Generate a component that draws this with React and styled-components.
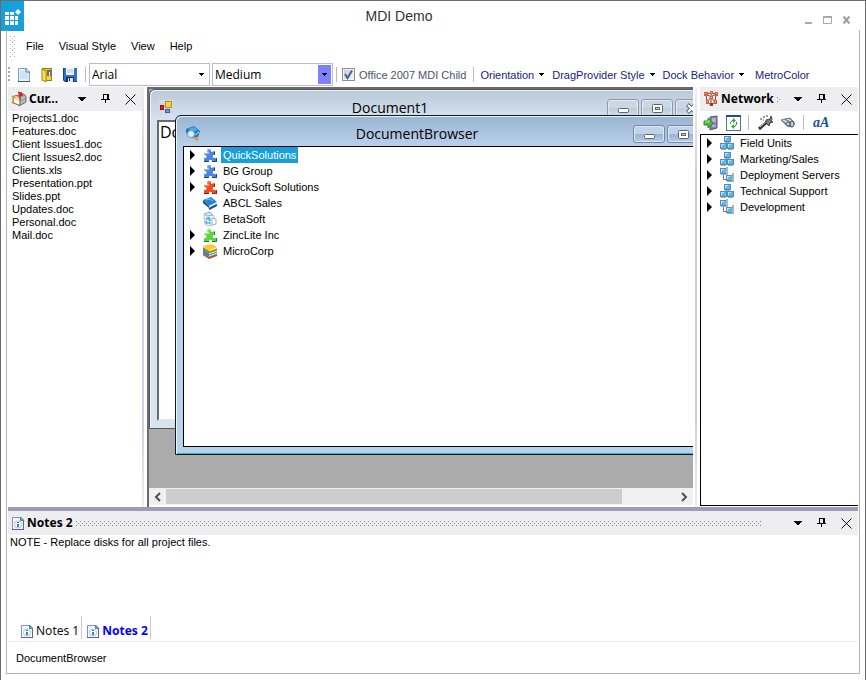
import { useState } from "react";
import styled, { createGlobalStyle } from "styled-components";

const files = [
  "Projects1.doc",
  "Features.doc",
  "Client Issues1.doc",
  "Client Issues2.doc",
  "Clients.xls",
  "Presentation.ppt",
  "Slides.ppt",
  "Updates.doc",
  "Personal.doc",
  "Mail.doc",
];

const companies = [
  { name: "QuickSolutions", icon: <PuzzleIcon light="#9cc4fa" color="#4a86e0" dark="#1d3f94" />, open: true },
  { name: "BG Group", icon: <PuzzleIcon light="#9cc4fa" color="#4a86e0" dark="#1d3f94" />, open: true },
  { name: "QuickSoft Solutions", icon: <PuzzleIcon light="#ff9a70" color="#ee4a26" dark="#9c1c08" />, open: true },
  { name: "ABCL Sales", icon: <BookIcon /> },
  { name: "BetaSoft", icon: <RecycleIcon /> },
  { name: "ZincLite Inc", icon: <PuzzleIcon light="#b8f59a" color="#5cd448" dark="#1d8418" />, open: true },
  { name: "MicroCorp", icon: <BooksIcon />, open: true },
];

const network = [
  { name: "Field Units", icon: <ComputersIcon />, open: true },
  { name: "Marketing/Sales", icon: <ComputersIcon />, open: true },
  { name: "Deployment Servers", icon: <ServersIcon />, open: true },
  { name: "Technical Support", icon: <ComputersIcon />, open: true },
  { name: "Development", icon: <ServersIcon />, open: true },
];

export default function App() {
  const [note, setNote] = useState("NOTE - Replace disks for all project files.");
  const [selected, setSelected] = useState("QuickSolutions");

  return (
    <Window>
      <GlobalStyle />
      <TitleBar>
        <Logo><LogoIcon /></Logo>
        <Title>MDI Demo</Title>
        <WindowButtons>
          <IconButton aria-label="Minimize"><svg width="11" height="10"><path d="M2 8h7" stroke="#a9a9a9" strokeWidth="2" /></svg></IconButton>
          <IconButton aria-label="Maximize"><svg width="11" height="10"><path d="M1.500 2v6.500h8V2" fill="none" stroke="#a9a9a9" /><path d="M1 2h9" stroke="#a9a9a9" strokeWidth="2" /></svg></IconButton>
          <IconButton aria-label="Close"><svg width="11" height="10"><path d="M2.500 1.500l6 7M8.500 1.500l-6 7" stroke="#a0a0a0" strokeWidth="2" /></svg></IconButton>
        </WindowButtons>
      </TitleBar>

      <Frame>
        <MenuBar>
          <MenuGrip />
          <MenuItem>File</MenuItem>
          <MenuItem>Visual Style</MenuItem>
          <MenuItem>View</MenuItem>
          <MenuItem>Help</MenuItem>
        </MenuBar>

        <ToolBar>
          <ToolGrip />
          <FileButtons>
            <IconButton aria-label="New"><NewIcon /></IconButton>
            <IconButton aria-label="Open"><OpenIcon /></IconButton>
            <IconButton aria-label="Save"><SaveIcon /></IconButton>
          </FileButtons>
          <Separator />
          <Combo label="Font" value="Arial" />
          <Combo label="Size" value="Medium" active />
          <Separator />
          <CheckLabel>
            <CheckWrap>
              <CheckBox type="checkbox" defaultChecked />
              <CheckMark width="13" height="13"><path d="M3 6l2.500 4L10 2.500" fill="none" stroke="#46648f" strokeWidth="2" /></CheckMark>
            </CheckWrap>
            Office 2007 MDI Child
          </CheckLabel>
          <Separator />
          <DropButton>Orientation<SmallArrow /></DropButton>
          <DropButton>DragProvider Style<SmallArrow /></DropButton>
          <DropButton>Dock Behavior<SmallArrow /></DropButton>
          <MetroButton>MetroColor</MetroButton>
        </ToolBar>

        <Workspace>
          <LeftDock>
            <DockHeader icon={<MailboxIcon />} title="Cur..." plain />
            <FileList>
              {files.map((file) => <li key={file}>{file}</li>)}
            </FileList>
          </LeftDock>
          <Splitter />
          <MdiArea>
            <MdiCanvas>
              <ChildWindow $x={0} $y={0}>
                <ChildTitle icon={<FormIcon />} title="Document1" />
                <Editor aria-label="Document1" defaultValue="Document1" />
              </ChildWindow>
              <ChildWindow $x={26} $y={26} $active>
                <ChildTitle icon={<BrowserIcon />} title="DocumentBrowser" active />
                <ChildBody>
                  <Tree items={companies} selected={selected} onSelect={setSelected} />
                </ChildBody>
              </ChildWindow>
            </MdiCanvas>
            <ScrollBar>
              <ScrollButton aria-label="Scroll left"><svg width="7" height="10"><path d="M6 1L2 5l4 4" fill="none" stroke="#505050" strokeWidth="2" /></svg></ScrollButton>
              <ScrollThumb />
              <ScrollRest />
              <ScrollButton aria-label="Scroll right"><svg width="7" height="10"><path d="M1 1l4 4-4 4" fill="none" stroke="#505050" strokeWidth="2" /></svg></ScrollButton>
            </ScrollBar>
          </MdiArea>
          <Splitter />
          <RightDock>
            <DockHeader icon={<NetworkIcon />} title="Network" />
            <NetworkTools>
              <IconButton aria-label="Enter"><EnterIcon /></IconButton>
              <IconButton aria-label="Refresh"><RefreshIcon /></IconButton>
              <Separator />
              <IconButton aria-label="Wizard"><WandIcon /></IconButton>
              <IconButton aria-label="Find"><BinocularsIcon /></IconButton>
              <Separator />
              <FontButton aria-label="Font">aA</FontButton>
            </NetworkTools>
            <NetworkBody>
              <Tree items={network} />
            </NetworkBody>
          </RightDock>
        </Workspace>

        <Notes>
          <DockHeader icon={<NoteIcon />} title="Notes 2" wide />
          <NoteText aria-label="Notes 2" value={note} onChange={(e) => setNote(e.target.value)} />
          <Tabs>
            <Tab><NoteIcon />Notes 1</Tab>
            <Tab $active><NoteIcon />Notes 2</Tab>
          </Tabs>
        </Notes>
        <StatusBar>DocumentBrowser</StatusBar>
      </Frame>
    </Window>
  );
}

function Combo({ label, value, active }) {
  return (
    <ComboWrap>
      <Select aria-label={label} defaultValue={value}>
        <option>{value}</option>
      </Select>
      <ComboArrow $active={active}><SmallArrow /></ComboArrow>
    </ComboWrap>
  );
}

function DockHeader({ icon, title, plain, wide }) {
  return (
    <DockHead>
      {icon}
      <DockTitle>{title}</DockTitle>
      <DockDots $plain={plain} $wide={wide} />
      <DockButtons>
        <IconButton aria-label="Window position">
          <svg width="10" height="10"><path d="M1 3h8v1H8v1H7v1H6v1H4V6H3V5H2V4H1z" fill="#000" /></svg>
        </IconButton>
        <IconButton aria-label="Auto hide">
          <svg width="10" height="10" shapeRendering="crispEdges"><path d="M2 0h6v5h1v1H5v3H4V6H0V5h2zM3 1v4h3V1z" fill="#000" fillRule="evenodd" /></svg>
        </IconButton>
        <IconButton aria-label="Close">
          <svg width="11" height="11"><path d="M.5.5l10 10M10.500.5l-10 10" stroke="#111" /></svg>
        </IconButton>
      </DockButtons>
    </DockHead>
  );
}

function ChildTitle({ icon, title, active }) {
  return (
    <ChildBar>
      {icon}
      <ChildName>{title}</ChildName>
      <ChildButtons>
        <ChildButton $active={active} aria-label="Minimize">
          <svg width="13" height="11"><rect x="1.500" y="5.500" width="10" height="4" rx="1" fill="#fff" stroke="#5a6473" /></svg>
        </ChildButton>
        <ChildButton $active={active} aria-label="Restore">
          <svg width="13" height="11"><rect x="1.500" y="1.500" width="10" height="8" rx="1" fill="#fff" stroke="#5a6473" /><rect x="4.500" y="4.500" width="4" height="2" fill="#c3d2e3" stroke="#5a6473" /></svg>
        </ChildButton>
        <ChildButton $active={active} aria-label="Close">
          <svg width="13" height="11"><path d="M2.500 1.500l8 8M10.500 1.500l-8 8" stroke="#5a6473" strokeWidth="4" /><path d="M3 2l7 7M10 2l-7 7" stroke="#fff" strokeWidth="2" /></svg>
        </ChildButton>
      </ChildButtons>
    </ChildBar>
  );
}

function Tree({ items, selected, onSelect }) {
  return (
    <TreeList>
      {items.map((item) => (
        <TreeRow key={item.name}>
          <Expander>
            {item.open && (
              <IconButton aria-label={"Expand " + item.name}>
                <svg width="6" height="10"><path d="M0 0l5 5-5 5z" fill="#000" /></svg>
              </IconButton>
            )}
          </Expander>
          {item.icon}
          <TreeLabel $selected={item.name === selected} onClick={() => onSelect && onSelect(item.name)}>
            {item.name}
          </TreeLabel>
        </TreeRow>
      ))}
    </TreeList>
  );
}

function SmallArrow() {
  return <svg width="6" height="4"><path d="M0 0h5v1H4v1H3v1H2V2H1V1H0z" fill="#000" /></svg>;
}

function LogoIcon() {
  return (
    <svg width="23" height="29" fill="#fff">
      <path d="M4 11h4v3H4zM9 11h4v3H9zM4 15h4v4H4zM9 15h4v4H9zM14 15h3v4h-3zM4 20h4v4H4zM9 20h4v4H9zM14 20h3v4h-3z" />
      <path d="M17 8l3 3-3 3-3-3z" />
    </svg>
  );
}

function NewIcon() {
  return (
    <svg width="16" height="16">
      <path d="M2.500 1.500h8l3 3v10h-11z" fill="#e4f0fb" stroke="#7c9fc6" />
      <path d="M10 1.500V5h4" fill="#fff" stroke="#426c9c" />
      <path d="M4 5h5M4 7h8M4 9h8M4 11h8" stroke="#b4d1ea" />
      <path d="M2 14.500h12" stroke="#4f5f6c" />
    </svg>
  );
}

function OpenIcon() {
  return (
    <svg width="16" height="16">
      <rect x="3.500" y="1.500" width="9" height="12" fill="#f0c52e" stroke="#9a7a1c" />
      <path d="M8 3h4v6H8z" fill="#6a7078" />
      <path d="M10 5h1v4h-1z" fill="#f6f6df" />
      <path d="M3 2l4 2v11l-4-2z" fill="#ffe04a" stroke="#a5821c" />
      <path d="M8 10h4v3H8z" fill="#f7d14a" />
    </svg>
  );
}

function SaveIcon() {
  return (
    <svg width="16" height="16">
      <path d="M1 1h14v14H3l-2-2z" fill="#2f74cc" />
      <path d="M1 1.500h2M1.500 1v12l2 2M15 14.500H3" fill="none" stroke="#16457f" />
      <path d="M4 1h8v7H4z" fill="#f4f9ff" />
      <path d="M5 3h6M5 5h6" stroke="#a9c2e0" />
      <path d="M4 10h8v5H4z" fill="#1c3152" />
      <path d="M6 11h5v4H6z" fill="#dce9f5" />
      <path d="M7 11h1v3H7z" fill="#1c3152" />
    </svg>
  );
}

function MailboxIcon() {
  return (
    <svg width="16" height="16">
      <path d="M5 5l6-2c3 0 4 2 4 4v4l-7 4z" fill="#a3a6ab" stroke="#6b6e72" />
      <path d="M9 8l5-2M10 12l4-2" stroke="#d4d6d9" />
      <path d="M2 8c0-5 6-4 7 0v6.500l-7-2.500z" fill="#f1d8b0" stroke="#8a6f55" />
      <path d="M3 8l5 2v3l-5-2z" fill="#fff" />
      <path d="M7 1l4 1v3L9 4v5" fill="#ee3322" stroke="#c1180d" />
      <path d="M1 5l3 2M1 11l2 1" stroke="#dd9038" strokeWidth="2" />
    </svg>
  );
}

function NetworkIcon() {
  return (
    <svg width="16" height="16">
      <path d="M3 3l5-1 5 1-1 8-4 3-4-3zM3 3l5 3 5-3M8 2v12M4 11l4-5 4 5" fill="none" stroke="#5f4f4c" />
      <path d="M1 1h4v4H1zM7 0h3v3H7zM12 1h3v4h-3zM3 9h3v4H3zM11 9h3v4h-3zM7 5h3v3H7z" fill="#e65b35" />
      <path d="M7 12h3v3H7z" fill="#b82d19" />
      <path d="M2 2.500h1M8 1.500h1M13 2.500h1M4 10.500h1M12 10.500h1M8 6.500h1" stroke="#ffc29c" />
    </svg>
  );
}

function NoteIcon() {
  return (
    <svg width="14" height="16">
      <path d="M1.500 2.500h8l3 3v9h-11z" fill="#f3f6fb" stroke="#8a8fc0" />
      <path d="M9.500 2v3.500h3.500z" fill="#5fb5b0" stroke="#3e8d98" />
      <circle cx="7" cy="9.500" r="3.500" fill="#fff" stroke="#b4c0cc" />
      <path d="M6 7h2v1H6zM6 9h2v3H6z" fill="#2882d6" />
      <path d="M1 14.500h12M12.500 6v9" stroke="#5d629e" />
    </svg>
  );
}

function FormIcon() {
  return (
    <svg width="14" height="14">
      <path d="M0 0h14v14H0z" fill="#d9d9d9" />
      <rect x="6.500" y="1.500" width="6" height="6" fill="#ffd33d" stroke="#c28a16" />
      <rect x="1.500" y="5.500" width="3" height="4" fill="#cf2e22" stroke="#8e1712" />
      <rect x="6.500" y="9.500" width="4" height="3" fill="#6a9df2" stroke="#335fb1" />
    </svg>
  );
}

function BrowserIcon() {
  return (
    <svg width="16" height="16">
      <path d="M1 4l8-3 6 5-2 6-5 1-7-5z" fill="#1e78ca" />
      <path d="M3 4l6-2 4 3-5 2z" fill="#4fa9ea" />
      <path d="M10 10l4-3" stroke="#d5eeff" />
      <circle cx="6" cy="9" r="3.500" fill="#d8f1ff" stroke="#7e9bb3" />
      <path d="M9 12l4 3" stroke="#e98b27" strokeWidth="2" />
    </svg>
  );
}

function PuzzleIcon({ light, color, dark }) {
  return (
    <svg width="14" height="16">
      <path d="M1 6h4C2 1 9 0 8 5l4-1v4c-3-1-3 4 0 3h2v4H9c1-3-4-3-3 0H1v-4c4 1 3-4 0-3z" fill={color} />
      <path d="M1.500 8V6.500H6C3 2 7 1 7 3.500" fill="none" stroke={light} />
      <path d="M1 14.500h5M9 14.500h4.500V11" fill="none" stroke={dark} />
      <path d="M11.500 5v3" stroke={dark} />
    </svg>
  );
}

function BookIcon() {
  return (
    <svg width="14" height="16">
      <path d="M0 5l8-3 6 5-8 4z" fill="#2583d4" />
      <path d="M0 5v3l6 5v-2z" fill="#0b499b" />
      <path d="M6 11l8-4v2l-8 4z" fill="#d6edff" />
      <path d="M6 14l8-4" stroke="#114f95" strokeWidth="2" />
      <path d="M3 5l4-1 3 2" fill="none" stroke="#6fc2ff" />
    </svg>
  );
}

function BooksIcon() {
  return (
    <svg width="14" height="16">
      <path d="M0 10l6 4 8-3v2l-8 3-6-4z" fill="#be4b22" />
      <path d="M0 7l6 4 8-3v3l-8 3-6-4z" fill="#2484c3" />
      <path d="M0 5l6 3 8-3v3l-8 3-6-4z" fill="#36a344" />
      <path d="M0 3l8-2 6 3-8 4z" fill="#ffc62e" />
      <path d="M0 4l6 4 8-3v2l-8 3-6-4z" fill="#b58013" />
      <path d="M6 8l8-3M6 11l8-3M6 13l8-3" stroke="#fff3bf" />
    </svg>
  );
}

function RecycleIcon() {
  return (
    <svg width="14" height="16">
      <path d="M1 4l6-1 4 2-1 9-5 1-3-2z" fill="#eef5f9" stroke="#b3c0c9" />
      <path d="M1 3l6-2 3 3-6 1z" fill="#d5e3ec" stroke="#9ab0bf" />
      <path d="M9 7l4 1v5l-4 1z" fill="#fafdff" stroke="#9fb2be" />
      <path d="M3 8l3-1 1 3M4 13l-1-3M7 11l-1 2" fill="none" stroke="#4ab0e2" strokeWidth="2" />
    </svg>
  );
}

function Computer({ x, y }) {
  return (
    <g transform={`translate(${x} ${y})`}>
      <path d="M0 0h7v6H0z" fill="#5d8ab5" />
      <path d="M1 1h5v4H1z" fill="#58b8f5" />
      <path d="M1 1h3v1H2v2H1z" fill="#b9e6ff" />
      <path d="M1 6h5v1H1z" fill="#a3abb3" />
    </g>
  );
}

function ComputersIcon() {
  return <svg width="14" height="16"><Computer x={4} y={1} /><Computer x={0} y={8} /><Computer x={7} y={8} /></svg>;
}

function ServersIcon() {
  return (
    <svg width="14" height="16">
      <path d="M3.500 8v4.500H7" fill="none" stroke="#777" />
      <Computer x={0} y={1} />
      <path d="M6 0h2v8H6z" fill="#b0b8c0" />
      <Computer x={6} y={8} />
      <path d="M12 6h2v9h-2z" fill="#a9b2bb" />
    </svg>
  );
}

function EnterIcon() {
  return (
    <svg width="16" height="16">
      <path d="M7 2l7-1v12l-7 2z" fill="#8583ad" stroke="#565371" />
      <path d="M9 4h4M9 6h4M9 11h4" stroke="#dcdcf4" />
      <path d="M1 6h4V3l5 5-5 5v-3H1z" fill="#4bbb40" stroke="#26882b" />
      <path d="M2 7h4V5" fill="none" stroke="#a8eb92" />
    </svg>
  );
}

function RefreshIcon() {
  return (
    <svg width="16" height="16">
      <rect x="1.500" y=".5" width="14" height="15" fill="#fff" stroke="#526e9b" />
      <path d="M1 1h15" stroke="#234d98" strokeWidth="2" />
      <path d="M5.500 9V7.500L7 5.500h2M11.500 7v2L10 11.500H8" fill="none" stroke="#248d2c" />
      <path d="M8 3l3 2.500L8 8zM9 9l-3 2.500L9 14z" fill="#35a33a" />
    </svg>
  );
}

function WandIcon() {
  return (
    <svg width="16" height="16">
      <path d="M1 14l8-7" stroke="#333" strokeWidth="3" />
      <path d="M2 12l7-6" stroke="#c9c9c9" />
      <path d="M8 5l4-1 1-3 1 3-1 2 2 1-3 1-1 3-3-3z" fill="#7c7c7c" stroke="#444" />
      <path d="M2 4h2M5 2h2M5 5h1M8 1h2" stroke="#8fa3b3" strokeWidth="2" />
    </svg>
  );
}

function BinocularsIcon() {
  return (
    <svg width="16" height="16">
      <path d="M1 5l4-1 8 4-1 4-5-1zM5 4l5-1 4 4v3" fill="#96a3ac" stroke="#6c777e" />
      <ellipse cx="8" cy="9" rx="2" ry="2" fill="#c5dae5" stroke="#555" />
      <ellipse cx="12" cy="9" rx="2" ry="3" fill="#b3cfdf" stroke="#555" />
      <path d="M3 5l4 2M7 4l4 2" stroke="#edf7ff" />
    </svg>
  );
}

const GlobalStyle = createGlobalStyle`
  * {
    box-sizing: border-box;
  }
  body {
    margin: 0;
    background: #fff;
    color: #000;
    font: 11px/16px "Liberation Sans", Arial, sans-serif;
  }
  button, select, input, textarea {
    font: inherit;
    color: inherit;
  }
  svg {
    display: block;
    flex-shrink: 0;
  }
`;

const Window = styled.div`
  display: flex;
  flex-direction: column;
  min-height: 100vh;
  border: 1px solid #6c6c6c;
`;

const TitleBar = styled.header`
  display: grid;
  grid-template-columns: 72px 1fr 72px;
  height: 29px;
`;

const Logo = styled.div`
  width: 23px;
  background: #169fdb;
`;

const Title = styled.h1`
  margin: 0;
  padding-right: 68px;
  text-align: center;
  font-size: 14px;
  line-height: 30px;
  font-weight: normal;
  color: #333;
`;

const WindowButtons = styled.div`
  display: flex;
  gap: 8px;
  padding: 8px 13px 0 0;
  justify-content: flex-end;
`;

const IconButton = styled.button`
  display: flex;
  align-items: center;
  justify-content: center;
  align-self: center;
  padding: 0;
  border: 0;
  background: none;
`;

const Frame = styled.main`
  display: flex;
  flex-direction: column;
  flex: 1;
  margin: 0 5px 6px;
  padding: 0 1px 1px;
  border: 1px solid #b4b4b4;
  border-top: 0;
`;

const MenuBar = styled.nav`
  display: flex;
  align-items: center;
  height: 32px;
`;

const MenuGrip = styled.div`
  width: 6px;
  height: 22px;
  margin: 0 4px 0 1px;
  background:
    conic-gradient(at 3px 3px, transparent 25%, #b79cc0 0 50%, transparent 0) 0 0 / 4px 4px,
    conic-gradient(at 3px 3px, transparent 25%, #b79cc0 0 50%, transparent 0) 2px 2px / 4px 4px;
`;

const MenuItem = styled.button`
  padding: 0 7px;
  margin-right: 1px;
  border: 0;
  background: none;
`;

const ToolBar = styled.div`
  display: flex;
  align-items: center;
  height: 25px;
  white-space: nowrap;
`;

const ToolGrip = styled.div`
  width: 2px;
  height: 16px;
  background: repeating-linear-gradient(#a8a8a8 0 2px, transparent 2px 4px);
`;

const FileButtons = styled.div`
  display: flex;
  gap: 7px;
  padding: 0 6px;
`;

const Separator = styled.div`
  width: 1px;
  height: 15px;
  margin: 0 3px 0 1px;
  background: #bcbcc0;
`;

const ComboWrap = styled.div`
  position: relative;
  width: 121px;
  height: 23px;
  margin-right: 2px;
  border: 1px solid #b2bdd9;
`;

const Select = styled.select`
  appearance: none;
  width: 100%;
  height: 100%;
  padding: 0 16px 0 2px;
  border: 0;
  background: #fff;
  font: 12px "Open Sans", sans-serif;
`;

const ComboArrow = styled.span`
  position: absolute;
  top: 1px;
  right: 1px;
  bottom: 1px;
  width: 13px;
  display: flex;
  align-items: center;
  justify-content: center;
  pointer-events: none;
  background: ${props => props.$active ? "#8080ff" : "none"};
`;

const CheckLabel = styled.label`
  display: flex;
  align-items: center;
  gap: 4px;
  padding: 0 6px 0 2px;
  color: #4d5468;
`;

const CheckWrap = styled.span`
  position: relative;
  display: flex;
`;

const CheckBox = styled.input`
  appearance: none;
  width: 13px;
  height: 13px;
  margin: 0;
  border: 1px solid #8e8f8f;
  background: linear-gradient(135deg, #c5ccd6, #f4f6f8);
  box-shadow: inset 0 0 0 1px #f2f2f2;
`;

const CheckMark = styled.svg`
  position: absolute;
  inset: 0;
  pointer-events: none;
  input:not(:checked) + & {
    display: none;
  }
`;

const DropButton = styled.button`
  display: flex;
  align-items: center;
  gap: 5px;
  padding: 0 4px 0 3px;
  border: 0;
  background: none;
  color: #1b1b80;
`;

const MetroButton = styled(DropButton)`
  margin-left: 3px;
`;

const Workspace = styled.div`
  display: flex;
  flex: 1;
  min-height: 420px;
`;

const LeftDock = styled.aside`
  display: flex;
  flex-direction: column;
  width: 134px;
`;

const RightDock = styled.aside`
  display: flex;
  flex-direction: column;
  width: 158px;
  padding-bottom: 1px;
`;

const Splitter = styled.div`
  width: 2px;
  margin-right: 3px;
  background: linear-gradient(#eee, #cfd0df 20%, #cfd0df 80%, #eee);
`;

const DockHead = styled.header`
  display: flex;
  align-items: center;
  height: 24px;
  padding: 0 6px 0 3px;
  background: #eeeef0;
`;

const DockTitle = styled.h2`
  margin: 0 0 0 2px;
  white-space: nowrap;
  font: bold 12px/20px "Noto Sans", Tahoma, sans-serif;
`;

const DockDots = styled.div`
  flex: 1;
  height: 6px;
  margin: 0 ${props => props.$wide ? 32 : 12}px 0 2px;
  background: ${props => props.$plain ? "none" : `
    conic-gradient(at 3px 3px, transparent 25%, #8e8e8e 0 50%, transparent 0) 0 0 / 4px 4px,
    conic-gradient(at 3px 3px, transparent 25%, #8e8e8e 0 50%, transparent 0) 2px 2px / 4px 4px`};
`;

const DockButtons = styled.div`
  display: flex;
  gap: 14px;
`;

const FileList = styled.ul`
  margin: 0;
  padding: 1px 4px;
  list-style: none;
  line-height: 13px;
`;

const MdiArea = styled.section`
  display: flex;
  flex-direction: column;
  flex: 1;
  min-width: 0;
  margin-right: 2px;
  padding-bottom: 2px;
  border: solid #6b6b6b;
  border-width: 2px 0 0 2px;
`;

const MdiCanvas = styled.div`
  position: relative;
  flex: 1;
  overflow: hidden;
  background: #ababab;
`;

const ChildWindow = styled.section`
  position: absolute;
  left: ${props => props.$x}px;
  top: ${props => props.$y}px;
  display: flex;
  flex-direction: column;
  width: 566px;
  height: 340px;
  padding: 0 7px 7px;
  border: 1px solid ${props => props.$active ? "#101820" : "#555"};
  border-radius: 6px 6px 0 0;
  background: ${props => props.$active
    ? "linear-gradient(#9ab4d1, #bad1ec 31px)"
    : "linear-gradient(#bac8d9, #d6e4f2 31px)"};
  box-shadow: ${props => props.$active
    ? "inset 1px 1px #edf5fc, inset 0 -1px #28b6d2"
    : "inset 1px 1px #edf3f9"};
`;

const ChildBar = styled.header`
  display: flex;
  align-items: center;
  height: 30px;
  padding-left: 2px;
  svg {
    margin-top: 4px;
  }
`;

const ChildName = styled.h3`
  flex: 1;
  margin: 0;
  padding-top: 6px;
  text-align: center;
  font: 14px/20px "Open Sans", "Segoe UI", sans-serif;
`;

const ChildButtons = styled.div`
  display: flex;
  gap: 2px;
`;

const ChildButton = styled.button`
  display: flex;
  align-items: center;
  justify-content: center;
  width: 32px;
  height: 18px;
  margin-top: 6px;
  padding: 0;
  border: 1px solid ${props => props.$active ? "#6e88a8" : "#8f9cad"};
  border-radius: 3px;
  background: ${props => props.$active
    ? "linear-gradient(#c0d3e8 50%, #98b4d2 50%, #b4cde8)"
    : "linear-gradient(#ccd7e4 50%, #bccbdc 50%, #cfdcea)"};
  box-shadow: inset 0 0 0 1px #dfe9f3;
  svg {
    margin: 0;
  }
`;

const ChildBody = styled.div`
  flex: 1;
  border: 1px solid #000;
  background: #fff;
`;

const Editor = styled.textarea`
  flex: 1;
  padding: 0 1px;
  border: 2px solid #696969;
  border-right-color: #e3e3e3;
  border-bottom-color: #e3e3e3;
  resize: none;
  background: #fff;
  font: 16px/20px "Open Sans", sans-serif;
`;

const ScrollBar = styled.div`
  display: flex;
  height: 17px;
  background: #f0f0f0;
`;

const ScrollButton = styled(IconButton)`
  width: 17px;
  height: 17px;
`;

const ScrollThumb = styled.div`
  flex: 456;
  margin: 1px 0;
  background: #cdcdcd;
`;

const ScrollRest = styled.div`
  flex: 54;
`;

const NetworkTools = styled.div`
  display: flex;
  align-items: center;
  gap: 6px;
  height: 23px;
  padding-left: 3px;
`;

const FontButton = styled(IconButton)`
  color: #164fa8;
  font: bold italic 14px/18px "Liberation Serif", serif;
`;

const NetworkBody = styled.div`
  flex: 1;
  border: solid #000;
  border-width: 1px 0 1px 1px;
`;

const TreeList = styled.ul`
  margin: 0;
  padding: 0 0 0 6px;
  list-style: none;
`;

const TreeRow = styled.li`
  display: flex;
  align-items: center;
  height: 16px;
`;

const Expander = styled.span`
  display: flex;
  width: 13px;
`;

const TreeLabel = styled.button`
  height: 16px;
  margin-left: 4px;
  padding: 0 2px;
  border: 0;
  line-height: 16px;
  white-space: nowrap;
  background: ${props => props.$selected ? "#169fdb" : "none"};
  color: ${props => props.$selected ? "#fff" : "#000"};
`;

const Notes = styled.section`
  display: flex;
  flex-direction: column;
  border-top: 4px solid #9c9eb9;
`;

const NoteText = styled.textarea`
  display: block;
  height: 81px;
  padding: 0 2px;
  border: 0;
  outline: 0;
  resize: none;
  line-height: 14px;
`;

const Tabs = styled.div`
  display: flex;
  height: 26px;
  padding: 0 0 2px 8px;
  border-bottom: 1px solid #ececee;
`;

const Tab = styled.button`
  display: flex;
  align-items: center;
  gap: 2px;
  padding: 6px 2px 0 4px;
  border: 0;
  border-right: 1px solid #c9c9c9;
  background: none;
  font: ${props => props.$active ? "bold" : "normal"} 12px/16px "Noto Sans", Tahoma, sans-serif;
  color: ${props => props.$active ? "#00f" : "#111"};
`;

const StatusBar = styled.footer`
  height: 30px;
  padding: 0 8px;
  line-height: 32px;
`;
